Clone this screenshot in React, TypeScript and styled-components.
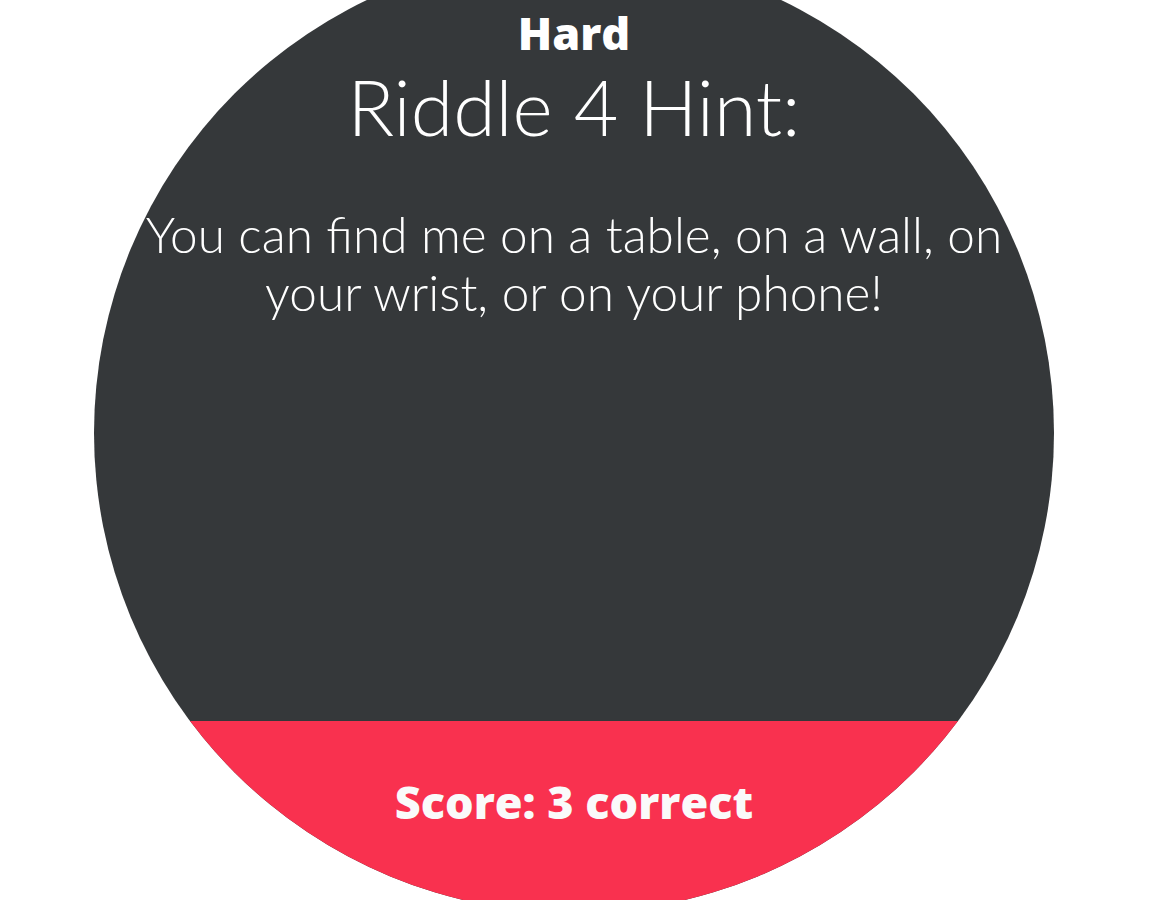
import React from "react";
import styled, { createGlobalStyle } from "styled-components";

const Global = createGlobalStyle`
  html, body {
    margin: 0;
    padding: 0;
    background: #ffffff;
    overflow: hidden;
  }
  body {
    font-family: "Lato", "Open Sans", "Liberation Sans", sans-serif;
  }
`;

const Page = styled.div`
  width: 1166px;
  height: 900px;
  overflow: hidden;
  background: #ffffff;
`;

const Face = styled.div`
  width: 960px;
  height: 960px;
  margin: -47px 0 0 94px;
  border-radius: 50%;
  overflow: hidden;
  display: flex;
  flex-direction: column;
  background: #35383a;
`;

const Body = styled.div`
  flex: 1;
  display: flex;
  flex-direction: column;
  align-items: center;
  padding-top: 52px;
  color: #ffffff;
  text-align: center;
`;

const Level = styled.div`
  font-family: "Open Sans", "Lato", sans-serif;
  font-size: 45px;
  font-weight: 800;
  line-height: 56px;
`;

const Title = styled.h1`
  margin: 0;
  font-size: 77px;
  font-weight: 300;
  line-height: 90px;
`;

const Hint = styled.p`
  margin: 54px 0 0;
  max-width: 920px;
  font-size: 49.5px;
  font-weight: 300;
  line-height: 58px;
`;

const Footer = styled.div`
  height: 192px;
  background: #f9314f;
  display: flex;
  justify-content: center;
  padding-top: 53px;
  box-sizing: border-box;
`;

const Score = styled.div`
  font-family: "Open Sans", "Lato", sans-serif;
  color: #fafafa;
  font-size: 45px;
  font-weight: 800;
  line-height: 56px;
`;

export default function App() {
  return (
    <Page>
      <Global />
      <Face>
        <Body>
          <Level>Hard</Level>
          <Title>Riddle 4 Hint:</Title>
          <Hint>You can find me on a table, on a wall, on your wrist, or on your phone!</Hint>
        </Body>
        <Footer>
          <Score>Score: 3 correct</Score>
        </Footer>
      </Face>
    </Page>
  );
}
